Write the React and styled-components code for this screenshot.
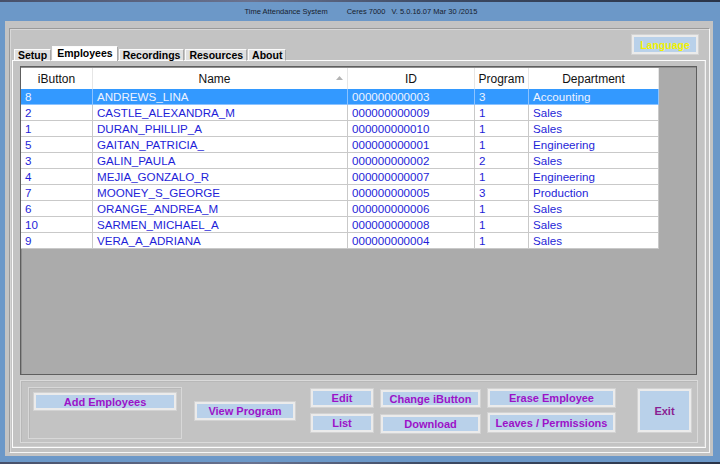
import React from 'react';
import styled, { createGlobalStyle } from 'styled-components';

const Global = createGlobalStyle`
  html, body { margin: 0; padding: 0; background: #6c98c8; }
  #root { width: 720px; height: 464px; }
  * { box-sizing: border-box; }
`;

const Screen = styled.div`
  width: 720px;
  height: 464px;
  overflow: hidden;
  background: #6c98c8;
  display: flex;
  flex-direction: column;
  font-family: "Liberation Sans", Arial, sans-serif;
`;

const Wallpaper = styled.div`
  flex: none;
  height: ${p => p.$h}px;
  background: ${p => p.$plain ? '#6c98c8' : 'linear-gradient(90deg, #47506a 0%, #6a7390 35%, #3d4a63 60%, #2a3448 100%)'};
`;

const TitleBar = styled.div`
  flex: none;
  height: 19px;
  display: flex;
  align-items: center;
  justify-content: center;
  font-size: 7.5px;
  color: #17212e;
  padding-left: 2px;
`;

const TitlePart = styled.span`
  margin-left: ${p => p.$gap || 0}px;
  white-space: nowrap;
`;

const Window = styled.div`
  flex: none;
  height: 435px;
  margin: 0 7px 0 5px;
  background: #c3c3c3;
  padding: 7px 3px 3px 4px;
  display: flex;
`;

const Frame = styled.div`
  flex: 1;
  display: flex;
  flex-direction: column;
  border: 1px solid;
  border-color: #9a9a9a #f6f6f6 #f6f6f6 #9a9a9a;
  box-shadow: inset 1px 1px 0 #d8d8d8;
`;

const TopRow = styled.div`
  flex: none;
  height: 31px;
  display: flex;
  justify-content: space-between;
  align-items: flex-start;
  padding: 0 11px 0 4px;
`;

const Tabs = styled.div`
  align-self: flex-end;
  display: flex;
  align-items: flex-end;
  gap: 1px;
  margin-bottom: -1px;
  position: relative;
  z-index: 1;
`;

const Tab = styled.div`
  height: ${p => (p.$active ? 15 : 12)}px;
  padding: ${p => (p.$active ? '1px 4px 0' : '0 3px')};
  background: ${p => (p.$active ? '#ffffff' : '#e0e0e0')};
  border: 1px solid;
  border-color: #fbfbfb #a8a8a8 ${p => (p.$active ? '#ffffff' : '#fbfbfb')} #fbfbfb;
  border-bottom-width: ${p => (p.$active ? 0 : 1)}px;
  font-size: 10.5px;
  font-weight: bold;
  color: #000;
  line-height: 11px;
  white-space: nowrap;
  display: flex;
  align-items: ${p => (p.$active ? 'flex-start' : 'center')};
`;

const Btn = styled.div`
  flex: none;
  width: ${p => p.$w}px;
  height: ${p => p.$h || 18}px;
  margin-top: ${p => p.$mt || 0}px;
  margin-left: ${p => p.$ml || 0}px;
  background: #b9d1ea;
  border: 2px solid #ebebeb;
  box-shadow: 0 0 0 1px #d2d2d2;
  display: flex;
  align-items: center;
  justify-content: center;
  font-size: ${p => p.$fs || 11}px;
  font-weight: bold;
  color: ${p => p.$color || '#9c12c8'};
  white-space: nowrap;
`;

const TabPage = styled.div`
  flex: none;
  height: 388px;
  margin: 0 3px 0 2px;
  border: 1px solid #fcfcfc;
  border-right-color: #f4f4f4;
  box-shadow: inset -1px -1px 0 #d0d0d0;
  padding: 5px 8px 0 7px;
  display: flex;
  flex-direction: column;
`;

const Grid = styled.div`
  flex: none;
  height: 309px;
  background: #ababab;
  border: 1px solid #5e5e5e;
  box-shadow: inset 1px 1px 0 #8e8e8e;
  padding-top: 1px;
`;

const Table = styled.div`
  display: grid;
  grid-template-columns: 72px 255px 127px 54px 130px;
  width: 638px;
`;

const HeadCell = styled.div`
  height: 21px;
  background: #ffffff;
  border-right: 1px solid #e6e6e6;
  display: flex;
  align-items: center;
  justify-content: center;
  font-size: 12px;
  color: #111;
`;

const HeadText = styled.span`
  flex: 1;
  text-align: center;
`;

const SortArrow = styled.svg`
  flex: none;
  margin-right: 4px;
  margin-top: -1px;
`;

const Cell = styled.div`
  height: 16px;
  padding: 0 4px;
  display: flex;
  align-items: center;
  font-size: 11.6px;
  white-space: nowrap;
  overflow: hidden;
  color: ${p => (p.$sel ? '#eef3ff' : '#1e1ed8')};
  background: ${p => (p.$sel ? '#3399ff' : '#ffffff')};
  border-right: 1px solid ${p => (p.$sel ? '#8cc3ff' : '#c9c9c9')};
  border-bottom: 1px solid ${p => (p.$sel ? '#8cc3ff' : '#c9c9c9')};
`;

const Group = styled.div`
  flex: none;
  height: 63px;
  margin: 5px -1px 0 0;
  border: 1px solid #dadada;
  box-shadow: inset 1px 1px 0 #b8b8b8;
  padding: 6px 0 0 7px;
  display: flex;
  align-items: flex-start;
`;

const SubGroup = styled.div`
  flex: none;
  width: 154px;
  height: 52px;
  border: 1px solid #d8d8d8;
  box-shadow: inset 1px 1px 0 #b8b8b8;
  padding: 5px 0 0 5px;
`;

const BtnCol = styled.div`
  flex: none;
  display: flex;
  flex-direction: column;
  gap: ${p => p.$gap}px;
  margin-left: ${p => p.$ml}px;
  margin-top: ${p => p.$mt}px;
`;

const rows = [
  ['8', 'ANDREWS_LINA', '000000000003', '3', 'Accounting'],
  ['2', 'CASTLE_ALEXANDRA_M', '000000000009', '1', 'Sales'],
  ['1', 'DURAN_PHILLIP_A', '000000000010', '1', 'Sales'],
  ['5', 'GAITAN_PATRICIA_', '000000000001', '1', 'Engineering'],
  ['3', 'GALIN_PAULA', '000000000002', '2', 'Sales'],
  ['4', 'MEJIA_GONZALO_R', '000000000007', '1', 'Engineering'],
  ['7', 'MOONEY_S_GEORGE', '000000000005', '3', 'Production'],
  ['6', 'ORANGE_ANDREA_M', '000000000006', '1', 'Sales'],
  ['10', 'SARMEN_MICHAEL_A', '000000000008', '1', 'Sales'],
  ['9', 'VERA_A_ADRIANA', '000000000004', '1', 'Sales'],
];

const headers = ['iButton', 'Name', 'ID', 'Program', 'Department'];

export default function App() {
  return (
    <>
      <Global />
      <Screen>
        <Wallpaper $h={2} />
        <TitleBar>
          <TitlePart>Time Attendance System</TitlePart>
          <TitlePart $gap={19}>Ceres 7000</TitlePart>
          <TitlePart $gap={6}>V. 5.0.16.07 Mar 30 /2015</TitlePart>
        </TitleBar>
        <Window>
          <Frame>
            <TopRow>
              <Tabs>
                <Tab>Setup</Tab>
                <Tab $active>Employees</Tab>
                <Tab>Recordings</Tab>
                <Tab>Resources</Tab>
                <Tab>About</Tab>
              </Tabs>
              <Btn $w={66} $h={19} $mt={6} $fs={10.5} $color="#f2f200">Language</Btn>
            </TopRow>
            <TabPage>
              <Grid>
                <Table>
                  {headers.map(h => (
                    <HeadCell key={h}>
                      <HeadText>{h}</HeadText>
                      {h === 'Name' && (
                        <SortArrow width="7" height="4" viewBox="0 0 7 4">
                          <path d="M0 4 L3.5 0 L7 4 Z" fill="#b4b4b4" />
                        </SortArrow>
                      )}
                    </HeadCell>
                  ))}
                  {rows.map((r, i) =>
                    r.map((c, j) => (
                      <Cell key={i + '-' + j} $sel={i === 0}>{c}</Cell>
                    ))
                  )}
                </Table>
              </Grid>
              <Group>
                <SubGroup>
                  <Btn $w={142} $h={17}>Add Employees</Btn>
                </SubGroup>
                <Btn $w={100} $h={18} $ml={13} $mt={15}>View Program</Btn>
                <BtnCol $ml={16} $mt={2} $gap={7}>
                  <Btn $w={62}>Edit</Btn>
                  <Btn $w={62}>List</Btn>
                </BtnCol>
                <BtnCol $ml={8} $mt={3} $gap={8}>
                  <Btn $w={99} $h={17}>Change iButton</Btn>
                  <Btn $w={99}>Download</Btn>
                </BtnCol>
                <BtnCol $ml={8} $mt={2} $gap={6}>
                  <Btn $w={127}>Erase Employee</Btn>
                  <Btn $w={127} $h={19}>Leaves / Permissions</Btn>
                </BtnCol>
                <Btn $w={53} $h={43} $ml={23} $mt={2} $color="#8a1e92">Exit</Btn>
              </Group>
            </TabPage>
          </Frame>
        </Window>
        <Wallpaper $h={6} $plain />
        <Wallpaper $h={2} />
      </Screen>
    </>
  );
}
